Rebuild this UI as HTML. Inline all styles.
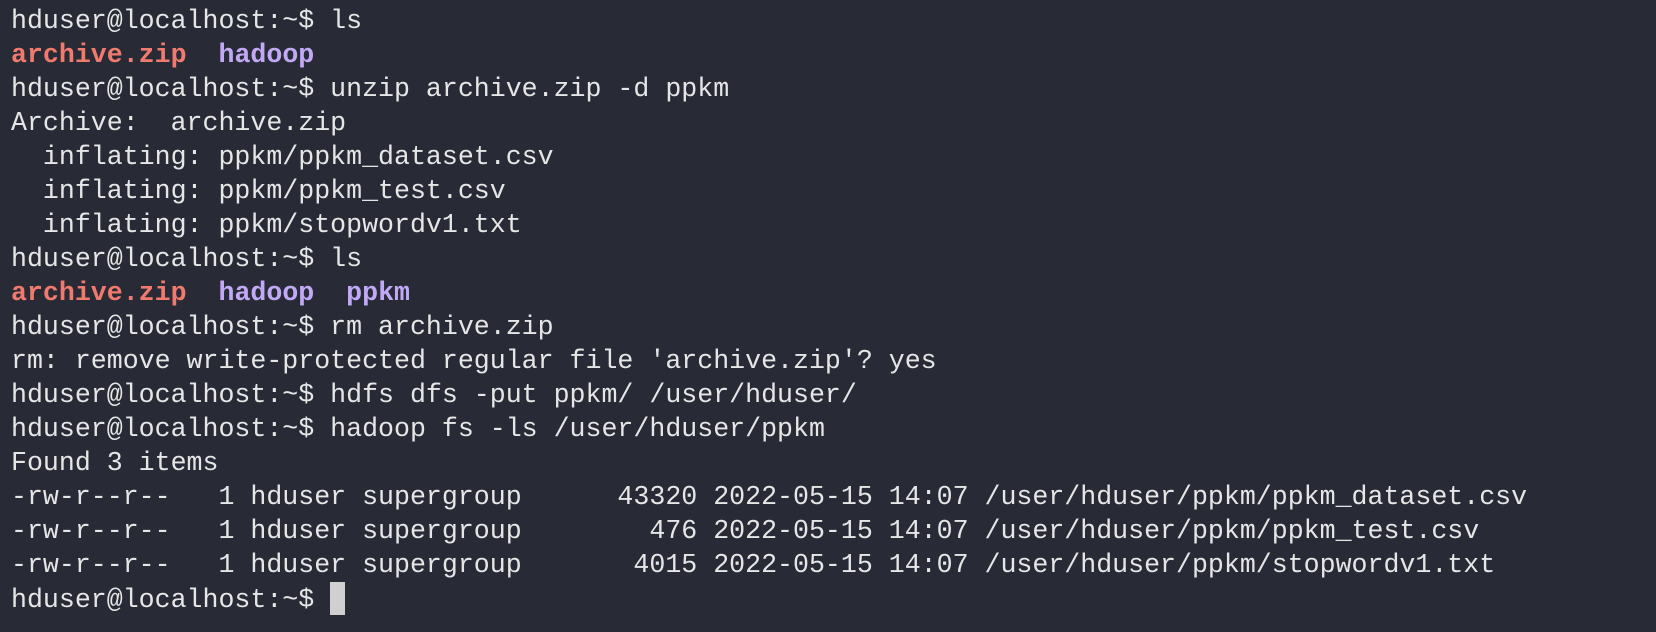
<!DOCTYPE html>
<html><head><style>
html,body{margin:0;padding:0;background:#282a36;width:1656px;height:632px;overflow:hidden}
pre{margin:0;position:absolute;left:11px;top:4px;font-family:"Liberation Mono",monospace;font-size:26.6px;line-height:34px;color:#e6e6e6}
.r{color:#ef7a6d;font-weight:bold}.p{color:#c2a9f5;font-weight:bold}
.c{display:inline-block;width:15px;height:33px;background:#d0d0d0;vertical-align:-8px}
</style></head><body><pre>hduser@localhost:~$ ls
<span class="r">archive.zip</span>  <span class="p">hadoop</span>
hduser@localhost:~$ unzip archive.zip -d ppkm
Archive:  archive.zip
  inflating: ppkm/ppkm_dataset.csv
  inflating: ppkm/ppkm_test.csv
  inflating: ppkm/stopwordv1.txt
hduser@localhost:~$ ls
<span class="r">archive.zip</span>  <span class="p">hadoop</span>  <span class="p">ppkm</span>
hduser@localhost:~$ rm archive.zip
rm: remove write-protected regular file 'archive.zip'? yes
hduser@localhost:~$ hdfs dfs -put ppkm/ /user/hduser/
hduser@localhost:~$ hadoop fs -ls /user/hduser/ppkm
Found 3 items
-rw-r--r--   1 hduser supergroup      43320 2022-05-15 14:07 /user/hduser/ppkm/ppkm_dataset.csv
-rw-r--r--   1 hduser supergroup        476 2022-05-15 14:07 /user/hduser/ppkm/ppkm_test.csv
-rw-r--r--   1 hduser supergroup       4015 2022-05-15 14:07 /user/hduser/ppkm/stopwordv1.txt
hduser@localhost:~$ <span class="c"></span></pre></body></html>
